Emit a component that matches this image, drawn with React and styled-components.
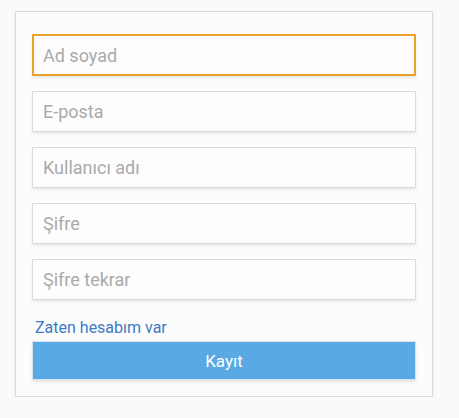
import React from 'react';
import styled, { createGlobalStyle } from 'styled-components';

const GlobalStyle = createGlobalStyle`
    html, body {
        margin: 0;
        padding: 0;
        background: #fafafa;
    }
    body {
        font-family: Roboto, "Liberation Sans", sans-serif;
    }
`;

const Page = styled.div`
    padding: 11px 26px 0 15px;
`;

const Card = styled.form`
    width: 384px;
    padding: 22px 16px 16px 16px;
    background: #fcfcfc;
    border: 1px solid #dcdcdc;
    box-shadow: 0 2px 4px rgba(0, 0, 0, 0.08);
    display: flex;
    flex-direction: column;
`;

const Fields = styled.div`
    display: flex;
    flex-direction: column;
    gap: 15px;
`;

const Input = styled.input`
    box-sizing: border-box;
    width: 100%;
    height: ${(p) => (p.$active ? '42px' : '41px')};
    background: #fdfdfd;
    border: ${(p) => (p.$active ? '2px solid #eba126' : '1px solid #dadada')};
    padding: 0 10px 0 ${(p) => (p.$active ? '9px' : '10px')};
    border-radius: 1px;
    box-shadow: 0 2px 3px rgba(0, 0, 0, 0.08);
    font-family: Roboto, "Liberation Sans", sans-serif;
    font-size: 18px;
    color: #333;
    outline: none;
    caret-color: #333;
    &::placeholder {
        color: #aaaaaa;
    }
`;

const LoginLink = styled.a`
    margin: 18px 0 0 3px;
    font-size: 16px;
    line-height: 20px;
    color: #3d7bc6;
    text-decoration: none;
    cursor: pointer;
`;

const SubmitButton = styled.button`
    margin-top: 3px;
    height: 39px;
    width: 100%;
    background: #58a9e4;
    border: 1px solid #d6e3ee;
    box-shadow: 0 2px 3px rgba(0, 0, 0, 0.1);
    color: #fff;
    font-family: Roboto, "Liberation Sans", sans-serif;
    font-size: 17px;
    cursor: pointer;
`;

const fields = [
    { name: 'name', placeholder: 'Ad soyad' },
    { name: 'email', placeholder: 'E-posta' },
    { name: 'username', placeholder: 'Kullanıcı adı' },
    { name: 'password', placeholder: 'Şifre', type: 'password' },
    { name: 'password2', placeholder: 'Şifre tekrar', type: 'password' },
];

const App = () => {
    return (
        <Page>
            <GlobalStyle />
            <Card action="">
                <Fields>
                    {fields.map((f, i) => (
                        <Input
                            key={f.name}
                            name={f.name}
                            type={f.type || 'text'}
                            placeholder={f.placeholder}
                            $active={i === 0}
                            autoFocus={i === 0}
                        />
                    ))}
                </Fields>
                <LoginLink>Zaten hesabım var</LoginLink>
                <SubmitButton type="button">Kayıt</SubmitButton>
            </Card>
        </Page>
    );
};

export default App;
